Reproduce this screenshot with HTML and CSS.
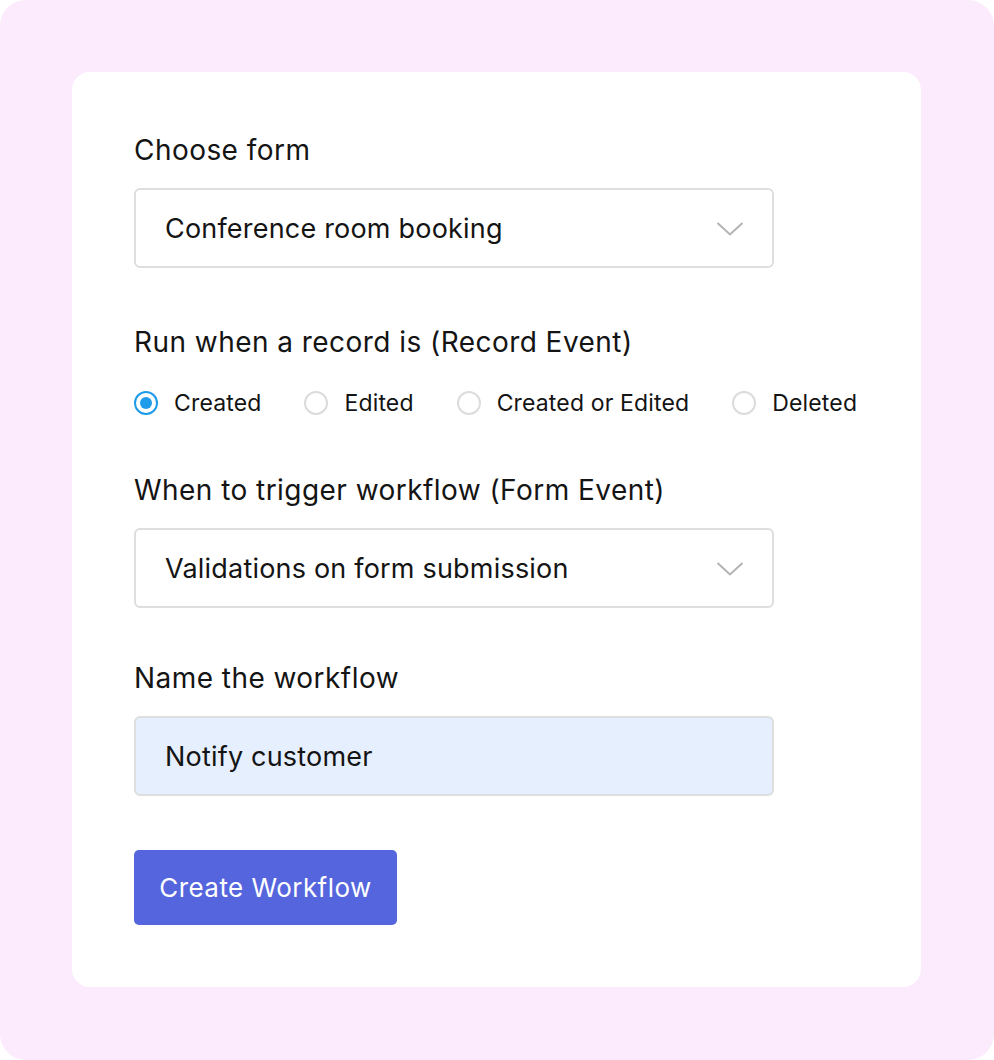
FILE: index.html
```html
<!DOCTYPE html>
<html lang="en">
<head>
  <meta charset="UTF-8" />
  <title>Create Workflow</title>
  <meta name="viewport" content="width=device-width, initial-scale=1" />
  <link rel="stylesheet" href="styles.css">
</head>
<body>
  <div class="backdrop">
    <div class="card">
      <div class="field">
        <div class="label">Choose form</div>
        <div class="select">
          <span>Conference room booking</span>
          <svg class="chevron" width="28" height="16" viewBox="0 0 28 16"><path d="M1.5 2 L14 13.5 L26.5 2" fill="none" stroke="#b3b3b3" stroke-width="2"/></svg>
        </div>
      </div>

      <div class="field radios-field">
        <div class="label">Run when a record is (Record Event)</div>
        <div class="radios">
          <label class="radio checked"><span class="dot"></span>Created</label>
          <label class="radio"><span class="dot"></span>Edited</label>
          <label class="radio"><span class="dot"></span>Created or Edited</label>
          <label class="radio"><span class="dot"></span>Deleted</label>
        </div>
      </div>

      <div class="field trigger-field">
        <div class="label">When to trigger workflow (Form Event)</div>
        <div class="select">
          <span>Validations on form submission</span>
          <svg class="chevron" width="28" height="16" viewBox="0 0 28 16"><path d="M1.5 2 L14 13.5 L26.5 2" fill="none" stroke="#b3b3b3" stroke-width="2"/></svg>
        </div>
      </div>

      <div class="field">
        <div class="label">Name the workflow</div>
        <div class="select name-input"><span>Notify customer</span></div>
      </div>

      <button class="create-btn">Create Workflow</button>
    </div>
  </div>
</body>
</html>
```

FILE: styles.css
```css
body {
  margin: 0;
  background: #fff;
  font-family: Inter, "Open Sans", sans-serif;
  color: #141414;
}
.backdrop {
  width: 994px;
  height: 1060px;
  background: #fbebfd;
  border-radius: 26px;
  padding: 72px;
  box-sizing: border-box;
}
.card {
  width: 849px;
  height: 915px;
  background: #fff;
  border-radius: 18px;
  box-sizing: border-box;
  padding: 62px 62px 0 62px;
  display: flex;
  flex-direction: column;
  align-items: flex-start;
}
.field {
  display: flex;
  flex-direction: column;
  gap: 22px;
  margin-bottom: 58px;
}
.trigger-field {
  margin-bottom: 54px;
}
.label {
  font-size: 28px;
  line-height: 32px;
  letter-spacing: 0.45px;
}
.select {
  width: 640px;
  height: 80px;
  box-sizing: border-box;
  border: 2px solid #dedede;
  border-radius: 6px;
  display: flex;
  align-items: center;
  justify-content: space-between;
  padding: 0 28px 0 29px;
  font-size: 27px;
  letter-spacing: 0.2px;
}
.chevron {
  margin-top: 2px;
}
.name-input {
  background: #e6effd;
}
.radios-field {
  gap: 30px;
  margin-bottom: 56px;
}
.radios {
  display: flex;
  height: 30px;
  align-items: center;
}
.radio {
  display: flex;
  align-items: center;
  gap: 16px;
  font-size: 23px;
  letter-spacing: 0.15px;
  white-space: nowrap;
  margin-right: 43px;
}
.dot {
  width: 24px;
  height: 24px;
  box-sizing: border-box;
  border: 2px solid #dcdcdc;
  border-radius: 50%;
  display: inline-flex;
  align-items: center;
  justify-content: center;
}
.radio.checked .dot {
  border-color: #1e9be9;
}
.radio.checked .dot::after {
  content: "";
  width: 12px;
  height: 12px;
  border-radius: 50%;
  background: #1e9be9;
}
.create-btn {
  margin-top: -4px;
  width: 263px;
  height: 75px;
  border: none;
  border-radius: 5px;
  background: #5565dd;
  color: #fff;
  font-family: inherit;
  font-size: 26px;
  letter-spacing: 0.45px;
}
```
